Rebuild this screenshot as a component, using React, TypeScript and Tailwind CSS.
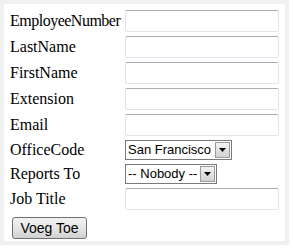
import React from "react";

const serif = { fontFamily: '"Liberation Serif", "Times New Roman", serif' };
const sans = { fontFamily: '"Liberation Sans", Arial, sans-serif' };

function TextRow({ label, last, tight }: { label: string; last?: boolean; tight?: boolean }) {
  return (
    <div className={`flex items-center h-[22px] ${last ? "" : "mb-[4px]"}`}>
      <div
        className={`w-[115px] text-[16px] leading-[22px] text-black whitespace-nowrap ${tight ? "tracking-[-0.5px]" : ""}`}
        style={serif}
      >
        {label}
      </div>
      <div className="w-[154px] h-[22px] bg-white border border-[#e2e3ea] border-t-[#abadb3] rounded-[2px]" />
    </div>
  );
}

function SelectRow({ label, value, width }: { label: string; value: string; width: string }) {
  return (
    <div className="flex items-center h-[20px] mb-[4px]">
      <div className="w-[115px] text-[16px] leading-[20px] text-black" style={serif}>
        {label}
      </div>
      <div className={`${width} h-[20px] bg-white border border-[#7a7a7a] flex items-center justify-between pl-[2px] pr-[1px]`}>
        <span className="text-[13px] leading-[18px] text-black whitespace-nowrap" style={sans}>
          {value}
        </span>
        <div className="w-[15px] h-[16px] border border-[#9a9a9a] bg-gradient-to-b from-[#f4f4f4] to-[#d2d2d2] flex items-center justify-center">
          <svg width="7" height="4" viewBox="0 0 7 4">
            <polygon points="0,0 7,0 3.5,4" fill="#000" />
          </svg>
        </div>
      </div>
    </div>
  );
}

export default function App() {
  return (
    <div className="w-[293px] h-[250px] bg-white">
      <div className="w-[289px] h-[245px] border-4 border-[#f0f0f0] pt-[6px] pl-[6px]">
        <TextRow label="EmployeeNumber" tight />
        <TextRow label="LastName" />
        <TextRow label="FirstName" />
        <TextRow label="Extension" />
        <TextRow label="Email" />
        <SelectRow label="OfficeCode" value="San Francisco" width="w-[107px]" />
        <SelectRow label="Reports To" value="-- Nobody --" width="w-[92px]" />
        <TextRow label="Job Title" last />
        <div className="pt-[5px] pl-[2px]">
          <button
            className="w-[75px] h-[22px] border border-[#707070] rounded-[3px] bg-gradient-to-b from-[#f2f2f2] via-[#e6e6e6] to-[#d0d0d0] text-[14px] leading-[20px] text-black"
            style={sans}
          >
            Voeg Toe
          </button>
        </div>
      </div>
    </div>
  );
}
